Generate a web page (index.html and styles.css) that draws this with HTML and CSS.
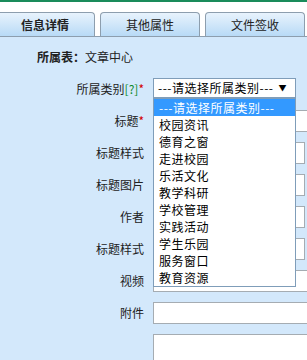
FILE: index.html
```html
<!DOCTYPE html>
<html lang="zh-CN">
<head>
  <meta charset="UTF-8">
  <title>信息详情</title>
  <link rel="stylesheet" href="styles.css">
</head>
<body>
  <div class="topline"></div>
  <div class="tabs">
    <div class="tab active">信息详情</div>
    <div class="tab">其他属性</div>
    <div class="tab">文件签收</div>
  </div>
  <div class="panel">
    <div class="form">
      <div class="owner"><b>所属表：</b>文章中心</div>

      <label class="lbl">所属类别<span class="hint">[?]</span><span class="req">*</span></label>
      <div class="field">
        <div class="select">---请选择所属类别---<span class="arrow">&#9660;</span></div>
        <ul class="options">
          <li class="selected">---请选择所属类别---</li>
          <li>校园资讯</li>
          <li>德育之窗</li>
          <li>走进校园</li>
          <li>乐活文化</li>
          <li>教学科研</li>
          <li>学校管理</li>
          <li>实践活动</li>
          <li>学生乐园</li>
          <li>服务窗口</li>
          <li>教育资源</li>
        </ul>
      </div>

      <label class="lbl">标题<span class="req">*</span></label>
      <div class="field"><input type="text" class="text wide"></div>

      <label class="lbl">标题样式</label>
      <div class="field"><input type="text" class="text"></div>

      <label class="lbl">标题图片</label>
      <div class="field"><input type="text" class="text"></div>

      <label class="lbl">作者</label>
      <div class="field"><input type="text" class="text"></div>

      <label class="lbl">标题样式</label>
      <div class="field"><input type="text" class="text"></div>

      <label class="lbl">视频</label>
      <div class="field"><input type="text" class="text wide"></div>

      <label class="lbl">附件</label>
      <div class="field"><input type="text" class="text wide"></div>

      <label class="lbl"></label>
      <div class="field"><textarea class="area"></textarea></div>
    </div>
  </div>
</body>
</html>
```

FILE: styles.css
```css
/* page */
html, body {
  margin: 0;
  height: 100%;
  overflow: hidden;
}

body {
  display: flex;
  flex-direction: column;
  font-family: "Noto Sans CJK SC", "Liberation Sans", sans-serif;
  font-size: 12px;
  color: #222;
  background-color: #fff;
}

.topline {
  flex: none;
  height: 2px;
  background-color: #1a8c5b;
}

/* tabs */
.tabs {
  flex: none;
  display: flex;
  gap: 5px;
  margin-left: -5px;
  padding-top: 10px;
  border-bottom: 1px solid #8d9eae;
}

.tab {
  flex: none;
  width: 100px;
  height: 24px;
  box-sizing: border-box;
  border: 1px solid #8d9eae;
  border-bottom: none;
  border-radius: 4px 4px 0 0;
  background: linear-gradient(#e8f3fd, #b8daf6);
  text-align: center;
  line-height: 24px;
  color: #222;
}

.tab.active {
  font-weight: bold;
}

/* form panel */
.panel {
  flex: 1;
  min-height: 0;
  background-color: #d3e8fb;
  padding-top: 9px;
  overflow: hidden;
}

.form {
  display: grid;
  grid-template-columns: 144px 154px;
  column-gap: 9px;
  row-gap: 10px;
}

.owner {
  grid-column: 1 / 3;
  padding-left: 37px;
  line-height: 22px;
}

.lbl {
  text-align: right;
  line-height: 22px;
  white-space: nowrap;
}

.hint {
  color: #0a8a2a;
}

.req {
  color: #d40000;
}

.field {
  position: relative;
  min-width: 0;
}

.text {
  display: block;
  height: 22px;
  width: 152px;
  box-sizing: border-box;
  margin: 0;
  border: 1px solid #a5acb2;
  background-color: #fff;
}

.text.wide {
  width: 220px;
}

.area {
  display: block;
  width: 220px;
  height: 60px;
  box-sizing: border-box;
  margin: 0;
  border: 1px solid #a5acb2;
  background-color: #fff;
  resize: none;
}

/* select + open list */
.select {
  position: relative;
  width: 143px;
  height: 20px;
  box-sizing: border-box;
  border: 1px solid #7f9db9;
  background-color: #fff;
  padding-left: 4px;
  font-size: 12px;
  letter-spacing: 0.5px;
  line-height: 18px;
  color: #000;
  white-space: nowrap;
}

.arrow {
  position: absolute;
  right: 8px;
  top: 0;
  font-size: 8px;
  line-height: 18px;
}

.options {
  position: absolute;
  top: 20px;
  left: 0;
  z-index: 5;
  width: 143px;
  box-sizing: border-box;
  margin: 0;
  padding: 0;
  list-style: none;
  border: 1px solid #7f9db9;
  background-color: #fff;
  font-size: 12px;
  letter-spacing: 0.5px;
  color: #000;
}

.options li {
  height: 17px;
  line-height: 17px;
  padding-left: 5px;
  white-space: nowrap;
  overflow: hidden;
}

.options li.selected {
  background-color: #3399ff;
  color: #fff;
}
```
